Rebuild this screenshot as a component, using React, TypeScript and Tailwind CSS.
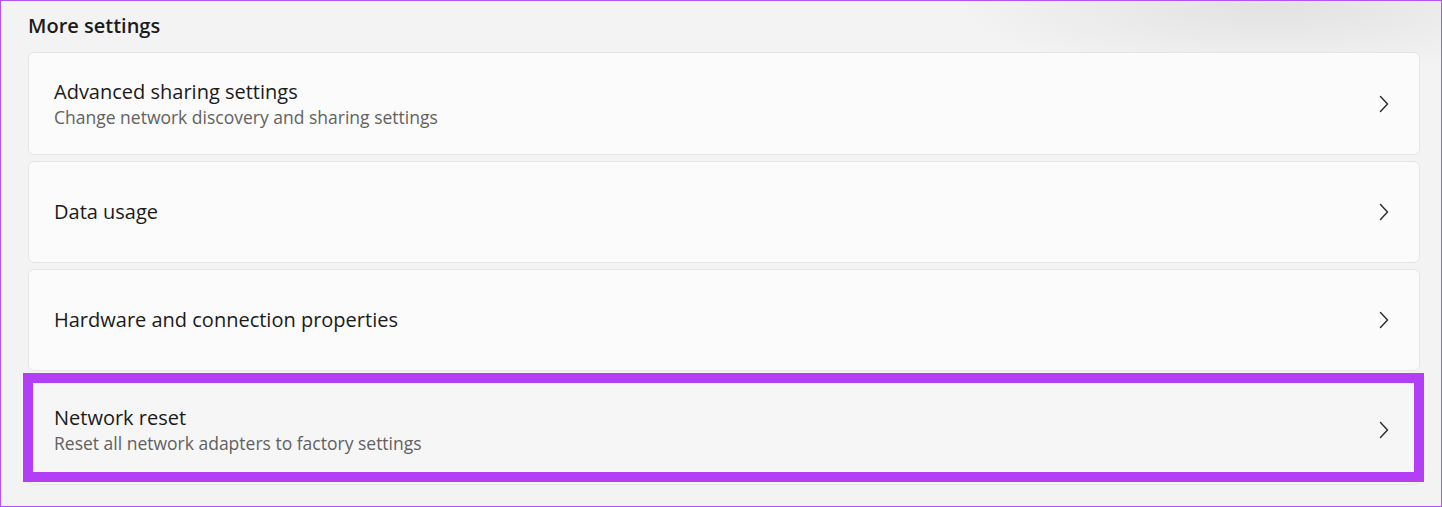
import React from "react";

type Item = { title: string; sub?: string; highlight?: boolean; h: string };

const items: Item[] = [
  { title: "Advanced sharing settings", sub: "Change network discovery and sharing settings", h: "h-[103px]" },
  { title: "Data usage", h: "h-[102px]" },
  { title: "Hardware and connection properties", h: "h-[102px]" },
  { title: "Network reset", sub: "Reset all network adapters to factory settings", highlight: true, h: "h-[108px]" },
];

const Chevron: React.FC = () => (
  <svg width="10" height="18" viewBox="0 0 10 18" fill="none" className="shrink-0">
    <path d="M1.5 1.5 L8.5 9 L1.5 16.5" stroke="#2b2b2b" strokeWidth="1.4" strokeLinecap="round" strokeLinejoin="round" />
  </svg>
);

const App: React.FC = () => {
  return (
    <div
      className="relative w-[1442px] h-[507px] overflow-hidden bg-[#f3f3f3] border border-[#b455f0]"
      style={{ fontFamily: '"Open Sans", "Noto Sans", sans-serif' }}
    >
      <div className="pointer-events-none absolute inset-0 bg-[radial-gradient(ellipse_320px_70px_at_1270px_5px,#e2e2e2,transparent)]" />
      <div className="relative pl-[27px] pr-[21px]">
        <h2 className="pt-[11px] h-[51px] text-[20px] font-semibold text-[#1b1b1b] leading-[28px]">
          More settings
        </h2>
        <div className="flex flex-col gap-[6px]">
          {items.map((it) => (
            <div
              key={it.title}
              className={`relative ${it.h} rounded-[6px] border border-[#e5e5e5] ${
                it.highlight ? "bg-[#f6f6f6]" : "bg-[#fbfbfb]"
              } flex items-center pl-[25px] pr-[30px]`}
            >
              {it.highlight && (
                <div className="pointer-events-none absolute -left-[6px] -right-[5px] -top-[5px] bottom-[2px] border-[10px] border-[#b43df6]" />
              )}
              <div className={`flex-1 flex flex-col ${it.highlight ? "mt-[-2px]" : ""}`}>
                <span className="text-[20px] leading-[26px] text-[#1a1a1a]">{it.title}</span>
                {it.sub && (
                  <span className="text-[17.5px] leading-[24px] text-[#616161]">{it.sub}</span>
                )}
              </div>
              <div className={it.highlight ? "mt-[-2px]" : ""}>
                <Chevron />
              </div>
            </div>
          ))}
        </div>
      </div>
    </div>
  );
};

export default App;
